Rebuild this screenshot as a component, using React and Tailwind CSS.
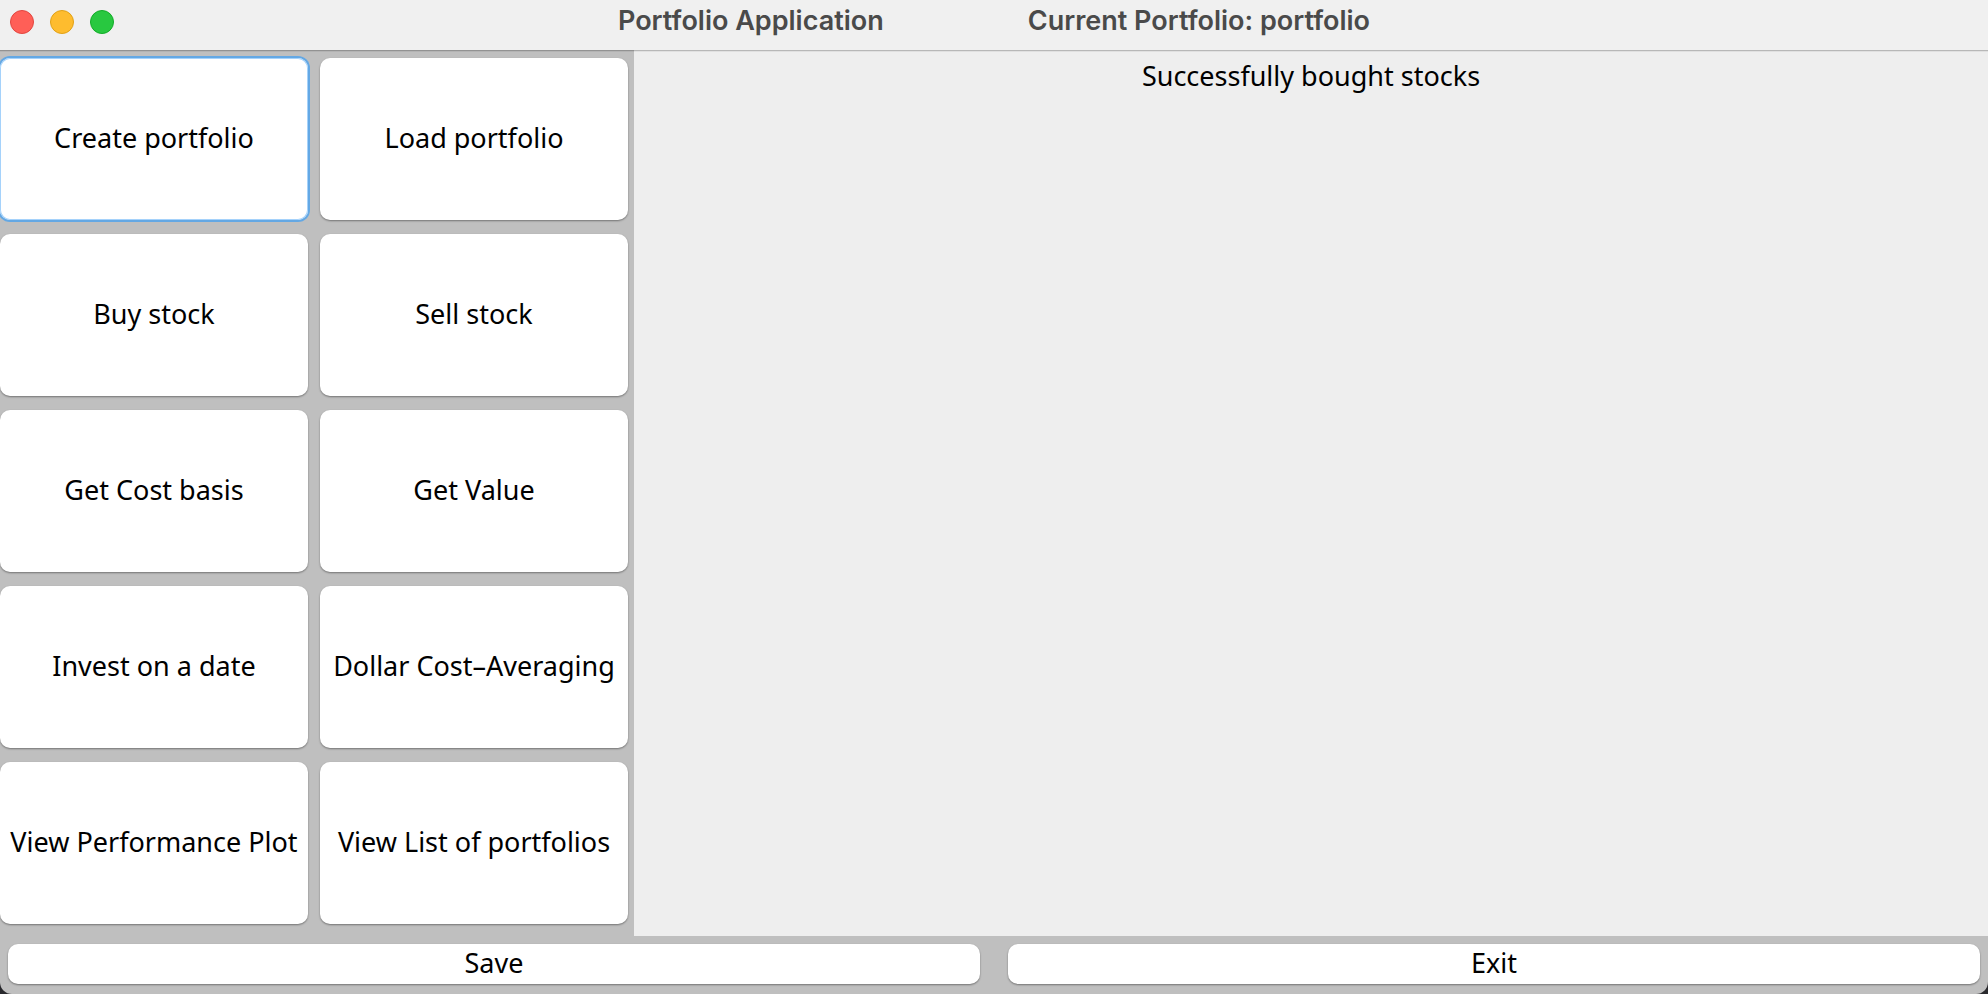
const actions = [
  'Create portfolio',
  'Load portfolio',
  'Buy stock',
  'Sell stock',
  'Get Cost basis',
  'Get Value',
  'Invest on a date',
  'Dollar Cost\u2013Averaging',
  'View Performance Plot',
  'View List of portfolios',
];

const raised = 'shadow-[0_1px_2px_rgba(0,0,0,0.4)]';
const focused = 'shadow-[inset_0_0_0_1px_#a5d2fb,0_0_0_2px_#64a8e4]';

function PushButton({ label, active = false }) {
  return (
    <button
      type="button"
      className={`flex items-center justify-center whitespace-nowrap rounded-[10px] bg-white pb-[3px] text-black outline-none ${active ? focused : raised}`}
    >
      {label}
    </button>
  );
}

function TitleBar() {
  return (
    <header className="relative z-10 flex h-[50px] shrink-0 items-start justify-center bg-[#f0f0f0] shadow-[0_1px_0_rgba(0,0,0,0.18),0_2px_0_rgba(0,0,0,0.06)]">
      <div className="absolute left-[10px] top-[10px] flex gap-4">
        <button type="button" aria-label="Close" className="size-6 rounded-full border border-[#e2463f] bg-[#ff5f57]" />
        <button type="button" aria-label="Minimize" className="size-6 rounded-full border border-[#e1a116] bg-[#febc2e]" />
        <button type="button" aria-label="Zoom" className="size-6 rounded-full border border-[#12ac28] bg-[#28c840]" />
      </div>
      <h1 className="flex gap-[144px] whitespace-nowrap pt-[5px] font-['Inter',sans-serif] text-[27px] font-semibold leading-8 text-[#4a4a4a]">
        <span>Portfolio Application</span>
        <span>Current Portfolio: portfolio</span>
      </h1>
    </header>
  );
}

export default function App() {
  return (
    <div className="min-h-screen bg-[#28282c]">
      <div className="flex min-h-screen flex-col overflow-hidden rounded-b-[12px] bg-[#bfbfbf] font-['Noto_Sans',sans-serif] text-[27px] leading-8 text-black">
        <TitleBar />
        <div className="flex grow">
          <nav className="grid w-[634px] shrink-0 auto-rows-fr grid-cols-2 gap-x-3 gap-y-[14px] pb-3 pr-[6px] pt-2">
            {actions.map((label, index) => (
              <PushButton key={label} label={label} active={index === 0} />
            ))}
          </nav>
          <main className="grow bg-[#eeeeee] pt-[10px] text-center">
            <p role="status">Successfully bought stocks</p>
          </main>
        </div>
        <footer className="grid h-[58px] shrink-0 grid-cols-2 gap-7 px-2 pb-[10px] pt-2">
          <PushButton label="Save" />
          <PushButton label="Exit" />
        </footer>
      </div>
    </div>
  );
}
